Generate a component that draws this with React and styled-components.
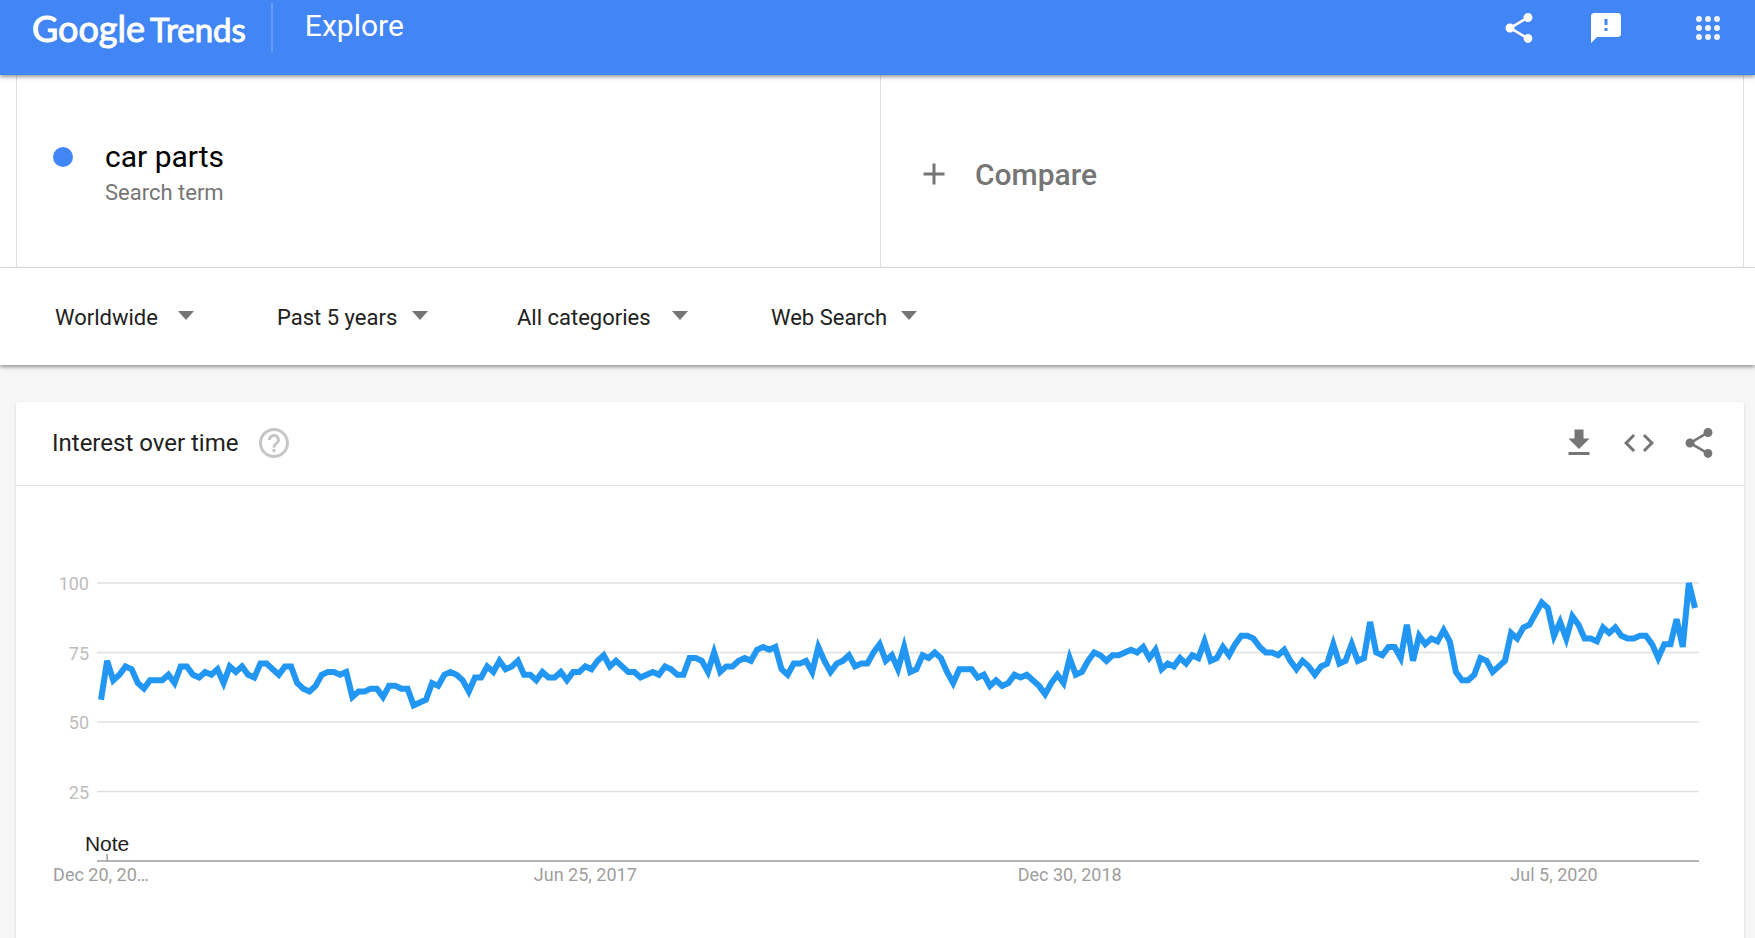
import React, { useLayoutEffect, useRef, useState } from 'react';
import styled, { createGlobalStyle } from 'styled-components';
import {
    MdAdd,
    MdCode,
    MdFeedback,
    MdHelpOutline,
    MdShare,
} from 'react-icons/md';

const GlobalStyle = createGlobalStyle`
    * {
        box-sizing: border-box;
    }

    body {
        margin: 0;
        background: #f6f6f6;
        color: #212121;
        font-family: Roboto, 'Liberation Sans', sans-serif;
    }

    button, input, select {
        font: inherit;
        color: inherit;
        border: 0;
        padding: 0;
        margin: 0;
        background: none;
    }
`;

const Page = styled.div`
    display: flex;
    flex-direction: column;
    min-height: 100vh;
`;

const Header = styled.header`
    position: relative;
    z-index: 2;
    display: flex;
    align-items: center;
    height: 75px;
    padding: 3px 35px 23px 32px;
    background: #4285f4;
    color: #fff;
    box-shadow: 0 2px 4px rgba(0, 0, 0, 0.4);
`;

const Logo = styled.a`
    display: flex;
    align-items: baseline;
    gap: 5px;
    padding-top: 2px;
    color: inherit;
    text-decoration: none;
    font-family: Lato, sans-serif;
    font-size: 33px;
    line-height: 40px;
    -webkit-text-stroke: 1px currentColor;
`;

const LogoBrand = styled.span`
    font-size: 36px;
`;

const Divider = styled.span`
    width: 2px;
    height: 49px;
    margin: 0 32px 0 25px;
    background: rgba(255, 255, 255, 0.2);
`;

const PageName = styled.h1`
    margin: 0;
    padding-bottom: 4px;
    font-size: 30px;
    font-weight: 400;
    line-height: 36px;
`;

const HeaderActions = styled.nav`
    display: flex;
    align-items: center;
    gap: 51px;
    margin-left: auto;
`;

const IconButton = styled.button`
    display: flex;
    cursor: pointer;
    color: ${({ $color }) => $color || 'inherit'};
`;

const AppsButton = styled(IconButton)`
    margin-left: 21px;
`;

const Terms = styled.section`
    display: grid;
    grid-template-columns: 1fr 1fr;
    padding: 0 11px 0 16px;
    background: #fff;
    border-bottom: 1px solid #e0e0e0;
`;

const TermCell = styled.div`
    display: flex;
    height: 192px;
    padding: 64px 35px 0;
    border-left: 1px solid #e0e0e0;

    &:last-child {
        padding-top: 77px;
        border-right: 1px solid #e0e0e0;
    }
`;

const Dot = styled.span`
    width: 20px;
    height: 20px;
    margin: 8px 32px 0 1px;
    border-radius: 50%;
    background: #4285f4;
`;

const TermLabel = styled.label`
    display: flex;
    flex: 1;
    flex-direction: column;
    color: #757575;
    font-size: 22px;
    line-height: 36px;
`;

const TermInput = styled.input`
    width: 100%;
    height: 36px;
    color: #000;
    font-size: 30px;
    line-height: 36px;
    outline: 0;
`;

const CompareButton = styled.button`
    display: flex;
    align-items: center;
    gap: 23px;
    height: 44px;
    color: #757575;
    font-size: 30px;
    font-weight: 500;
    cursor: pointer;
`;

const Filters = styled.section`
    position: relative;
    display: grid;
    grid-template-columns: 222px 240px 254px auto;
    align-items: center;
    height: 97px;
    padding: 0 55px;
    background: #fff;
    box-shadow: 0 2px 4px rgba(0, 0, 0, 0.4);
`;

const Filter = styled.label`
    display: flex;
    align-items: center;
`;

const FilterSelect = styled.select`
    width: ${({ $width }) => $width}px;
    height: 36px;
    padding-top: 2px;
    appearance: none;
    font-size: 22px;
    outline: 0;
`;

const Arrow = styled.span`
    margin-bottom: 2px;
    border: 8px solid transparent;
    border-top: 9px solid #757575;
    border-bottom: 0;
`;

const Card = styled.main`
    flex: 1;
    margin: 37px 11px 0 16px;
    border-radius: 3px 3px 0 0;
    background: #fff;
    box-shadow: 0 1px 3px rgba(0, 0, 0, 0.16);
`;

const CardHeader = styled.div`
    display: flex;
    align-items: center;
    height: 84px;
    padding: 0 27px 2px 36px;
    border-bottom: 1px solid #e0e0e0;
`;

const CardTitle = styled.h2`
    margin: 0 18px 0 0;
    font-size: 24px;
    font-weight: 400;
`;

const CardActions = styled.div`
    display: flex;
    gap: 24px;
    margin-left: auto;
`;

const ChartSvg = styled.svg`
    display: block;
    width: 100%;
    height: 420px;
    font-size: 18px;
`;

const filters = [
    { name: 'Region', value: 'Worldwide', width: 123 },
    { name: 'Time range', value: 'Past 5 years', width: 135 },
    { name: 'Category', value: 'All categories', width: 155 },
    { name: 'Search type', value: 'Web Search', width: 130 },
];

// weekly interest, Dec 20 2015 onwards
const interest = [
    58, 72, 65, 67, 70, 69, 64, 62, 65, 65, 65, 67, 64, 70, 70, 67, 66, 68, 67, 69,
    64, 70, 68, 70, 67, 66, 71, 71, 69, 67, 70, 70, 64, 62, 61, 63, 67, 68, 68, 67,
    68, 59, 61, 61, 62, 62, 59, 63, 63, 62, 62, 56, 57, 58, 64, 63, 67, 68, 67, 65,
    61, 66, 66, 70, 68, 72, 69, 70, 72, 67, 67, 65, 68, 66, 66, 68, 65, 68, 68, 70,
    69, 72, 74, 70, 72, 70, 68, 68, 66, 67, 68, 67, 70, 69, 67, 67, 73, 73, 72, 68,
    75, 68, 70, 70, 72, 73, 72, 76, 77, 76, 77, 69, 67, 71, 71, 72, 68, 77, 72, 68,
    71, 72, 74, 70, 71, 71, 75, 78, 72, 74, 69, 77, 68, 69, 74, 73, 75, 73, 68, 64,
    69, 69, 69, 66, 67, 63, 65, 63, 64, 67, 66, 67, 65, 63, 60, 64, 67, 64, 73, 67,
    68, 72, 75, 74, 72, 74, 74, 75, 76, 75, 77, 73, 76, 69, 71, 70, 73, 71, 74, 73,
    79, 72, 73, 77, 74, 78, 81, 81, 80, 77, 75, 75, 74, 76, 72, 69, 72, 70, 67, 70,
    71, 78, 71, 72, 78, 72, 73, 86, 75, 74, 77, 77, 73, 85, 72, 81, 78, 80, 79, 83,
    79, 68, 65, 65, 67, 73, 72, 68, 70, 72, 82, 80, 84, 85, 89, 93, 91, 81, 86, 80,
    88, 85, 80, 80, 79, 84, 82, 84, 81, 80, 80, 81, 81, 78, 73, 78, 78, 87, 77, 100,
    91,
];

const dates = [
    { week: 0, text: 'Dec 20, 20…' },
    { week: 79, text: 'Jun 25, 2017' },
    { week: 158, text: 'Dec 30, 2018' },
    { week: 237, text: 'Jul 5, 2020' },
];

const PLOT = { left: 81, right: 45, top: 97, height: 278 };

const InterestChart = () => {
    const ref = useRef(null);
    const [width, setWidth] = useState(1728);

    useLayoutEffect(() => {
        const observer = new ResizeObserver(([entry]) =>
            setWidth(entry.contentRect.width)
        );
        observer.observe(ref.current);
        return () => observer.disconnect();
    }, []);

    const end = width - PLOT.right;
    const x = (week) =>
        PLOT.left + 4 + (week * (end - PLOT.left - 8)) / (interest.length - 1);
    const y = (value) => PLOT.top + ((100 - value) * PLOT.height) / 100;

    return (
        <ChartSvg ref={ref} role='img' aria-label='Interest over time'>
            {[100, 75, 50, 25].map((value) => (
                <g key={value}>
                    <line
                        x1={PLOT.left}
                        x2={end}
                        y1={y(value)}
                        y2={y(value)}
                        stroke='#e0e0e0'
                        strokeWidth='1.5'
                    />
                    <text x='73' y={y(value) + 7} textAnchor='end' fill='#bdbdbd'>
                        {value}
                    </text>
                </g>
            ))}
            <line
                x1={PLOT.left}
                x2={end}
                y1={y(0)}
                y2={y(0)}
                stroke='#9e9e9e'
                strokeWidth='1.5'
            />
            <line
                x1={x(1)}
                x2={x(1)}
                y1={y(0) - 7}
                y2={y(0)}
                stroke='#9e9e9e'
                strokeWidth='1.5'
            />
            <text
                x={x(1)}
                y={y(0) - 10}
                textAnchor='middle'
                fill='#212121'
                fontFamily='Liberation Sans, sans-serif'
                fontSize='21'
            >
                Note
            </text>
            <polyline
                points={interest.map((value, week) => `${x(week)},${y(value)}`).join(' ')}
                fill='none'
                stroke='#2196f3'
                strokeWidth='6'
            />
            {dates.map(({ week, text }) => (
                <text key={week} x={x(week)} y={y(0) + 20} textAnchor='middle' fill='#9e9e9e'>
                    {text}
                </text>
            ))}
        </ChartSvg>
    );
};

const AppsIcon = () => (
    <svg width='24' height='24' viewBox='0 0 24 24' fill='#fff' fillOpacity='0.9'>
        {[3, 12, 21].map((cy) =>
            [3, 12, 21].map((cx) => <circle key={`${cx}-${cy}`} cx={cx} cy={cy} r='3' />)
        )}
    </svg>
);

const DownloadIcon = () => (
    <svg width='36' height='36' viewBox='0 0 24 24' fill='currentColor'>
        <path d='M19 9h-4V3H9v6H5l7 7 7-7zM5 18v2h14v-2H5z' />
    </svg>
);

const App = () => {
    const [term, setTerm] = useState('car parts');

    return (
        <Page>
            <GlobalStyle />
            <Header>
                <Logo href='#home'>
                    <LogoBrand>Google</LogoBrand>
                    <span>Trends</span>
                </Logo>
                <Divider />
                <PageName>Explore</PageName>
                <HeaderActions>
                    <IconButton aria-label='Share'>
                        <MdShare size={36} />
                    </IconButton>
                    <IconButton aria-label='Send feedback'>
                        <MdFeedback size={36} />
                    </IconButton>
                    <AppsButton aria-label='Apps'>
                        <AppsIcon />
                    </AppsButton>
                </HeaderActions>
            </Header>

            <Terms>
                <TermCell>
                    <Dot />
                    <TermLabel>
                        <TermInput value={term} onChange={(e) => setTerm(e.target.value)} />
                        Search term
                    </TermLabel>
                </TermCell>
                <TermCell>
                    <CompareButton>
                        <MdAdd size={36} />
                        Compare
                    </CompareButton>
                </TermCell>
            </Terms>

            <Filters>
                {filters.map(({ name, value, width }) => (
                    <Filter key={name}>
                        <FilterSelect aria-label={name} $width={width}>
                            <option>{value}</option>
                        </FilterSelect>
                        <Arrow />
                    </Filter>
                ))}
            </Filters>

            <Card>
                <CardHeader>
                    <CardTitle>Interest over time</CardTitle>
                    <IconButton aria-label='Help' $color='#c6c6c6'>
                        <MdHelpOutline size={36} />
                    </IconButton>
                    <CardActions>
                        <IconButton aria-label='Download' $color='#757575'>
                            <DownloadIcon />
                        </IconButton>
                        <IconButton aria-label='Embed' $color='#757575'>
                            <MdCode size={36} />
                        </IconButton>
                        <IconButton aria-label='Share chart' $color='#757575'>
                            <MdShare size={36} />
                        </IconButton>
                    </CardActions>
                </CardHeader>
                <InterestChart />
            </Card>
        </Page>
    );
};

export default App;
